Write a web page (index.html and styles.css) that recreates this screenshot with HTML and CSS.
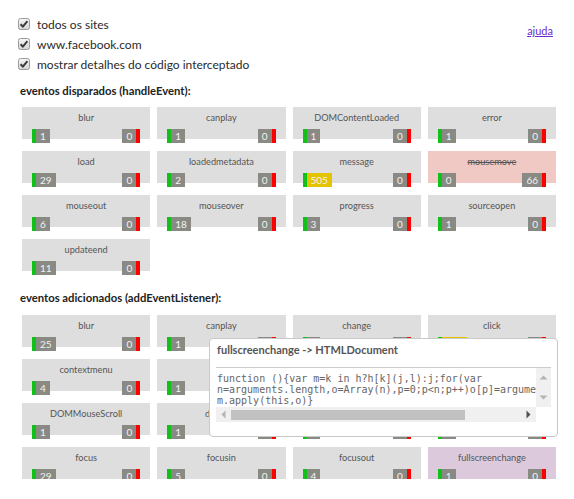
FILE: index.html
```html
<!DOCTYPE html>
<html>
<head>
<meta charset="utf-8">
<link rel="stylesheet" href="styles.css">
</head>
<body>
<div class="page">
  <div class="top">
    <div class="opts">
      <label class="opt"><svg class="cb" width="12" height="12" viewBox="0 0 12 12"><defs><linearGradient id="g" x1="0" y1="0" x2="0" y2="1"><stop offset="0" stop-color="#f6f6f6"/><stop offset="1" stop-color="#d4d4d4"/></linearGradient></defs><rect x="0.5" y="0.5" width="11" height="11" rx="2" fill="url(#g)" stroke="#9c9c9c"/><path d="M2.6 6.3 L4.9 8.6 L9.4 3.2" fill="none" stroke="#3a3a3a" stroke-width="2"/></svg><span>todos os sites</span></label>
      <label class="opt"><svg class="cb" width="12" height="12" viewBox="0 0 12 12"><rect x="0.5" y="0.5" width="11" height="11" rx="2" fill="url(#g)" stroke="#9c9c9c"/><path d="M2.6 6.3 L4.9 8.6 L9.4 3.2" fill="none" stroke="#3a3a3a" stroke-width="2"/></svg><span>www.facebook.com</span></label>
      <label class="opt"><svg class="cb" width="12" height="12" viewBox="0 0 12 12"><rect x="0.5" y="0.5" width="11" height="11" rx="2" fill="url(#g)" stroke="#9c9c9c"/><path d="M2.6 6.3 L4.9 8.6 L9.4 3.2" fill="none" stroke="#3a3a3a" stroke-width="2"/></svg><span>mostrar detalhes do código interceptado</span></label>
    </div>
    <a class="help" href="#">ajuda</a>
  </div>

  <h2 class="sect">eventos disparados (handleEvent):</h2>
  <div class="grid">
    <div class="tile"><div class="name">blur</div><div class="counts"><span class="c in">1</span><span class="c out">0</span></div></div>
    <div class="tile"><div class="name">canplay</div><div class="counts"><span class="c in">1</span><span class="c out">0</span></div></div>
    <div class="tile"><div class="name">DOMContentLoaded</div><div class="counts"><span class="c in">1</span><span class="c out">0</span></div></div>
    <div class="tile"><div class="name">error</div><div class="counts"><span class="c in">1</span><span class="c out">0</span></div></div>
    <div class="tile"><div class="name">load</div><div class="counts"><span class="c in">29</span><span class="c out">0</span></div></div>
    <div class="tile"><div class="name">loadedmetadata</div><div class="counts"><span class="c in">2</span><span class="c out">0</span></div></div>
    <div class="tile"><div class="name">message</div><div class="counts"><span class="c in hot">505</span><span class="c out">0</span></div></div>
    <div class="tile blocked"><div class="name"><s>mousemove</s></div><div class="counts"><span class="c in">0</span><span class="c out">66</span></div></div>
    <div class="tile"><div class="name">mouseout</div><div class="counts"><span class="c in">6</span><span class="c out">0</span></div></div>
    <div class="tile"><div class="name">mouseover</div><div class="counts"><span class="c in">18</span><span class="c out">0</span></div></div>
    <div class="tile"><div class="name">progress</div><div class="counts"><span class="c in">3</span><span class="c out">0</span></div></div>
    <div class="tile"><div class="name">sourceopen</div><div class="counts"><span class="c in">1</span><span class="c out">0</span></div></div>
    <div class="tile"><div class="name">updateend</div><div class="counts"><span class="c in">11</span><span class="c out">0</span></div></div>
  </div>

  <h2 class="sect sect2">eventos adicionados (addEventListener):</h2>
  <div class="grid">
    <div class="tile"><div class="name">blur</div><div class="counts"><span class="c in">25</span><span class="c out">0</span></div></div>
    <div class="tile"><div class="name">canplay</div><div class="counts"><span class="c in">1</span><span class="c out">0</span></div></div>
    <div class="tile"><div class="name">change</div><div class="counts"><span class="c in">2</span><span class="c out">0</span></div></div>
    <div class="tile"><div class="name">click</div><div class="counts"><span class="c in hot">112</span><span class="c out">0</span></div></div>
    <div class="tile"><div class="name">contextmenu</div><div class="counts"><span class="c in">4</span><span class="c out">0</span></div></div>
    <div class="tile"><div class="name">copy</div><div class="counts"><span class="c in">1</span><span class="c out">0</span></div></div>
    <div class="tile"><div class="name">cut</div><div class="counts"><span class="c in">1</span><span class="c out">0</span></div></div>
    <div class="tile"><div class="name">dblclick</div><div class="counts"><span class="c in">3</span><span class="c out">0</span></div></div>
    <div class="tile"><div class="name">DOMMouseScroll</div><div class="counts"><span class="c in">1</span><span class="c out">0</span></div></div>
    <div class="tile"><div class="name">dragend</div><div class="counts"><span class="c in">1</span><span class="c out">0</span></div></div>
    <div class="tile"><div class="name">dragstart</div><div class="counts"><span class="c in">1</span><span class="c out">0</span></div></div>
    <div class="tile"><div class="name">drop</div><div class="counts"><span class="c in">2</span><span class="c out">0</span></div></div>
    <div class="tile"><div class="name">focus</div><div class="counts"><span class="c in">29</span><span class="c out">0</span></div></div>
    <div class="tile"><div class="name">focusin</div><div class="counts"><span class="c in">5</span><span class="c out">0</span></div></div>
    <div class="tile"><div class="name">focusout</div><div class="counts"><span class="c in">4</span><span class="c out">0</span></div></div>
    <div class="tile selected"><div class="name">fullscreenchange</div><div class="counts"><span class="c in">1</span><span class="c out">0</span></div></div>
  </div>
</div>

<div class="tip">
  <div class="tip-title">fullscreenchange -&gt; HTMLDocument</div>
  <div class="code-box">
    <div class="code-view"><div class="code">function (){var m=k in h?h[k](j,l):j;for(var
n=arguments.length,o=Array(n),p=0;p&lt;n;p++)o[p]=arguments[p];return
m.apply(this,o)}</div></div>
    <div class="vbar">
      <svg class="arr" width="15" height="15" viewBox="0 0 15 15"><polygon points="3.5,9.5 11.5,9.5 7.5,5.5" fill="#b4b4b4"/></svg>
      <svg class="arr" width="15" height="15" viewBox="0 0 15 15"><polygon points="3.5,5.5 11.5,5.5 7.5,9.5" fill="#b4b4b4"/></svg>
    </div>
    <div class="hbar">
      <svg class="arr" width="15" height="15" viewBox="0 0 15 15"><polygon points="9.5,3.5 9.5,11.5 5.5,7.5" fill="#b4b4b4"/></svg>
      <div class="htrack"><div class="hthumb"></div></div>
      <svg class="arr" width="15" height="15" viewBox="0 0 15 15"><polygon points="5.5,3.5 5.5,11.5 9.5,7.5" fill="#505050"/></svg>
    </div>
    <div class="corner"></div>
  </div>
</div>
</body>
</html>
```

FILE: styles.css
```css
body {
  margin: 0;
  font-family: "Lato", "Open Sans", sans-serif;
  color: #333;
  background: #fff;
}

.page {
  padding: 14px 18px 0 18px;
}

.top {
  display: flex;
  justify-content: space-between;
  align-items: flex-start;
  width: 535px;
}

.opt {
  display: flex;
  align-items: center;
  gap: 7px;
  height: 20px;
  font-size: 12px;
  color: #2a2a2a;
}

.cb {
  display: block;
  flex: none;
}

.help {
  margin-top: 10px;
  font-size: 11px;
  line-height: 14px;
  color: #6a2bd0;
  text-decoration: underline;
}

.sect {
  margin: 10px 0 9px 2px;
  font-size: 11.3px;
  line-height: 14px;
  font-weight: bold;
  color: #222;
}

.sect2 {
  margin-top: 20px;
  margin-bottom: 10px;
}

.grid {
  margin-left: 4px;
  width: 534px;
  display: grid;
  grid-template-columns: repeat(4, 1fr);
  column-gap: 7px;
  row-gap: 12px;
}

.tile {
  height: 32px;
  background: #dedede;
}

.tile.blocked {
  background: #f0c8c4;
}

.tile.selected {
  background: #dccadc;
}

.name {
  padding-top: 5px;
  text-align: center;
  font-size: 9.2px;
  line-height: 12px;
  color: #555;
}

.counts {
  margin-top: 5px;
  display: flex;
  justify-content: space-between;
  padding: 0 10px;
}

.c {
  height: 14px;
  line-height: 14px;
  padding: 0 4px;
  font-size: 10px;
  color: #f2f2f2;
  background: #8a8a84;
}

.c.in {
  border-left: 4px solid #12c01a;
}

.c.out {
  border-right: 4px solid #ff0000;
}

.c.hot {
  background: #e4c300;
}

.tip {
  position: absolute;
  left: 209px;
  top: 338px;
  width: 349px;
  height: 99px;
  box-sizing: border-box;
  padding: 0 6px;
  background: #fff;
  border: 1px solid #c9c9c9;
  border-radius: 4px;
}

.tip-title {
  padding: 3px 0 9px 1px;
  font-size: 11px;
  line-height: 16px;
  font-weight: bold;
  color: #555;
  border-bottom: 1px solid #cccccc;
}

.code-box {
  display: grid;
  grid-template-columns: 320px 15px;
  grid-template-rows: 39px 15px;
}

.code-view {
  overflow: hidden;
}

.code {
  padding: 5px 0 0 1px;
  white-space: pre;
  font-family: "DejaVu Sans Mono", monospace;
  font-size: 10px;
  line-height: 11px;
  color: #666;
}

.vbar {
  background: #f0f0f0;
  display: flex;
  flex-direction: column;
  justify-content: space-between;
  padding: 2px 0;
}

.hbar {
  background: #f0f0f0;
  display: flex;
  align-items: center;
}

.arr {
  display: block;
  flex: none;
}

.htrack {
  flex: 1;
  height: 15px;
  display: flex;
  align-items: center;
}

.hthumb {
  width: 234px;
  height: 10px;
  background: #c1c1c1;
}

.corner {
  background: #fff;
}
```
